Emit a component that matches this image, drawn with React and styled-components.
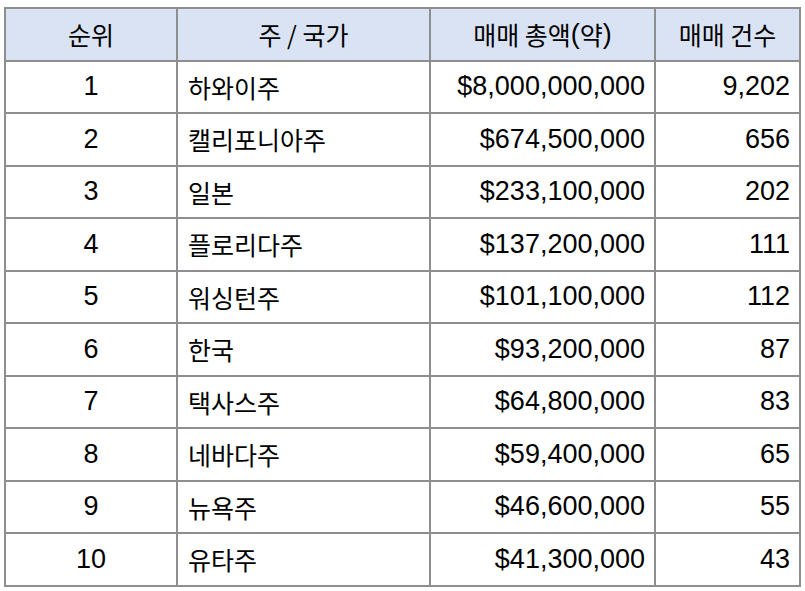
import React from "react";
import styled, { createGlobalStyle } from "styled-components";

const Global = createGlobalStyle`
  html, body { margin: 0; padding: 0; background: #ffffff; }
  body { font-family: "Liberation Sans", Arial, "Noto Sans CJK KR", sans-serif; }
`;

const Page = styled.div`
  padding: 7px 0 0 4px;
`;

const Table = styled.div`
  display: grid;
  grid-template-columns: 170px 251px 223px 143px;
  grid-auto-rows: 50.5px;
  gap: 2px;
  padding: 2px;
  width: max-content;
  background: #8e8e8e;
`;

const Cell = styled.div`
  display: flex;
  align-items: center;
  justify-content: ${(p) => (p.$align === "right" ? "flex-end" : p.$align === "left" ? "flex-start" : "center")};
  padding: 0 9px 0 ${(p) => (p.$align === "left" ? "10px" : "9px")};
  background: ${(p) => (p.$head ? "#dae3f3" : "#ffffff")};
  color: #000;
  font-family: "Liberation Sans", Arial, sans-serif;
  font-size: 27px;
  white-space: nowrap;
`;

const Ko = styled.span`
  font-family: "Noto Sans CJK KR", sans-serif;
  font-size: 25px;
`;

const rows = [
  ["1", "하와이주", "$8,000,000,000", "9,202"],
  ["2", "캘리포니아주", "$674,500,000", "656"],
  ["3", "일본", "$233,100,000", "202"],
  ["4", "플로리다주", "$137,200,000", "111"],
  ["5", "워싱턴주", "$101,100,000", "112"],
  ["6", "한국", "$93,200,000", "87"],
  ["7", "택사스주", "$64,800,000", "83"],
  ["8", "네바다주", "$59,400,000", "65"],
  ["9", "뉴욕주", "$46,600,000", "55"],
  ["10", "유타주", "$41,300,000", "43"],
];

export default function App() {
  return (
    <>
      <Global />
      <Page>
        <Table>
          <Cell $head><Ko>순위</Ko></Cell>
          <Cell $head><Ko>주 / 국가</Ko></Cell>
          <Cell $head><Ko>매매 총액</Ko>(<Ko>약</Ko>)</Cell>
          <Cell $head><Ko>매매 건수</Ko></Cell>
          {rows.map((r) => (
            <React.Fragment key={r[0]}>
              <Cell>{r[0]}</Cell>
              <Cell $align="left"><Ko>{r[1]}</Ko></Cell>
              <Cell $align="right">{r[2]}</Cell>
              <Cell $align="right">{r[3]}</Cell>
            </React.Fragment>
          ))}
        </Table>
      </Page>
    </>
  );
}
